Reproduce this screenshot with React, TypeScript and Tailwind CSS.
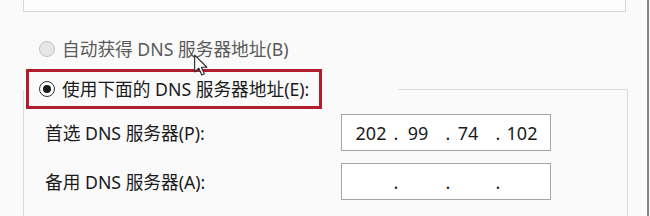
import React from "react";

const font = {
  fontFamily: '"Noto Sans", "Noto Sans CJK SC", sans-serif',
};

function IpBox({ parts }: { parts: string[] }) {
  return (
    <div className="w-[210px] h-[37px] border border-[#a5a5a5] bg-white flex items-center text-[18px] leading-[20px] text-[#1b1b1b]">
      <div className="w-0 ml-[29px] flex justify-center whitespace-nowrap">{parts[0]}</div>
      <div className="w-0 ml-[25px] flex justify-center whitespace-nowrap">.</div>
      <div className="w-0 ml-[22px] flex justify-center whitespace-nowrap">{parts[1]}</div>
      <div className="w-0 ml-[30px] flex justify-center whitespace-nowrap">.</div>
      <div className="w-0 ml-[20px] flex justify-center whitespace-nowrap">{parts[2]}</div>
      <div className="w-0 ml-[30px] flex justify-center whitespace-nowrap">.</div>
      <div className="w-0 ml-[24px] flex justify-center whitespace-nowrap">{parts[3]}</div>
    </div>
  );
}

export default function App() {
  return (
    <div
      className="relative w-[650px] h-[216px] bg-[#fafafa] flex overflow-hidden text-[#1b1b1b]"
      style={font}
    >
      <div className="w-[647px] h-full pl-[23px] flex flex-col">
        <div className="w-[603px] h-[12px] border-x border-b border-[#d8d8d8] bg-[#fcfcfc]" />

        <div className="mt-[27px] h-[20px] flex items-center pl-[16px] gap-[7px]">
          <div className="w-[16px] h-[16px] rounded-full border border-[#c2c2c2] bg-[#e6e6e6]" />
          <span className="text-[17.7px] leading-[20px] text-[#5a5a5a] whitespace-nowrap">
            自动获得 DNS 服务器地址(B)
          </span>
        </div>

        <div className="mt-[31px] w-[605px] flex-1 border-x border-[#dadada] flex flex-col">
          <div className="-mt-[21px] h-[40px] flex items-center">
            <div className="ml-[2px] w-[296px] h-[40px] border-[3px] border-[#b01d2d] bg-[#fafafa] flex items-center pl-[10px] gap-[7px]">
              <div className="w-[16px] h-[16px] rounded-full border border-[#333333] bg-white flex items-center justify-center">
                <div className="w-[8px] h-[8px] rounded-full bg-[#1a1a1a]" />
              </div>
              <span className="text-[17.7px] leading-[20px] whitespace-nowrap">
                使用下面的 DNS 服务器地址(E):
              </span>
            </div>
            <div className="ml-[76px] flex-1 h-px bg-[#dadada]" />
          </div>

          <div className="mt-[5px] h-[37px] flex items-center pl-[21px]">
            <span className="w-[296px] text-[17.7px] leading-[20px] whitespace-nowrap">
              首选 DNS 服务器(P):
            </span>
            <IpBox parts={["202", "99", "74", "102"]} />
          </div>

          <div className="mt-[12px] h-[37px] flex items-center pl-[21px]">
            <span className="w-[296px] text-[17.7px] leading-[20px] whitespace-nowrap">
              备用 DNS 服务器(A):
            </span>
            <IpBox parts={["", "", "", ""]} />
          </div>
        </div>
      </div>
      <div className="w-[2px] h-full bg-[#858585]" />
      <div className="w-px h-full bg-[#f2f2f2]" />

      <svg
        className="absolute left-[193px] top-[54px]"
        width="16"
        height="23"
        viewBox="0 0 13 20"
      >
        <path
          d="M1 1 L1 15.5 L4.6 12.3 L7.2 18.2 L9.4 17.2 L6.9 11.5 L11.6 11.5 Z"
          fill="#ffffff"
          stroke="#2a2a2a"
          strokeWidth="1"
          strokeLinejoin="round"
        />
      </svg>
    </div>
  );
}
